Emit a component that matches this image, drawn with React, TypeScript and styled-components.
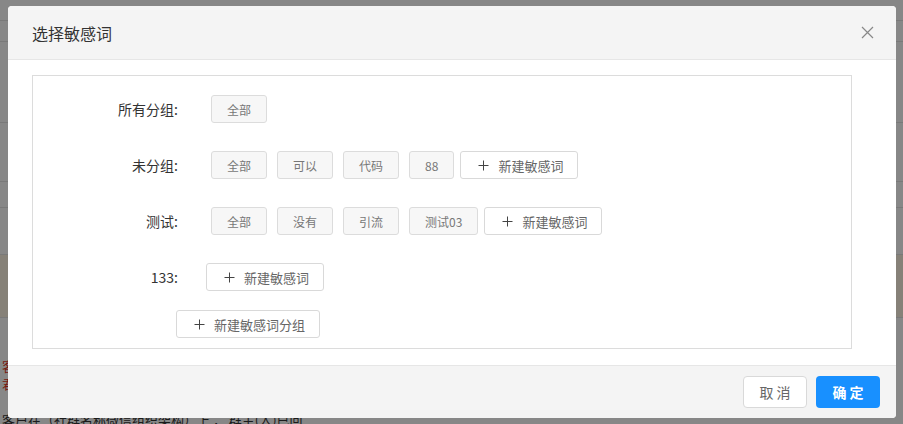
import React from 'react'
import styled, { createGlobalStyle } from 'styled-components'

const GlobalStyle = createGlobalStyle`
  html, body {
    margin: 0;
    padding: 0;
    width: 903px;
    height: 424px;
    overflow: hidden;
    font-family: "Noto Sans CJK SC", "Noto Sans", "Liberation Sans", sans-serif;
  }
`

const groups = [
  { name: '未分组', words: ['全部', '可以', '代码', '88'] },
  { name: '测试', words: ['全部', '没有', '引流', '测试03'] },
  { name: '133', words: [] as string[] },
]

const PlusIcon = () => (
  <svg width="11" height="11" viewBox="0 0 11 11">
    <path d="M5.5 0.5v10M0.5 5.5h10" stroke="#444" strokeWidth="1" fill="none" />
  </svg>
)

const App = () => {
  return (
    <>
      <GlobalStyle />
      <Page>
        <BackRows>
          <BackRow $h={20} />
          <BackRow $h={20} />
          <BackRow $h={80} />
          <BackRow $h={58} />
          <BackRow $h={25} />
          <BackRow $h={46} />
          <BackRow $h={62} $tint />
          <BackText $red $top={38}>客户管理</BackText>
          <BackText $red $top={-2}>君君</BackText>
          <BackText $top={16}>客户在（社群名称微信组织架构）上 ， 群主(人)已回</BackText>
        </BackRows>
        <Overlay>
          <Modal>
            <Header>
              <Title>选择敏感词</Title>
              <Close aria-label="close">
                <svg width="13" height="13" viewBox="0 0 13 13">
                  <path d="M1 1l11 11M12 1L1 12" stroke="#888" strokeWidth="1.2" fill="none" />
                </svg>
              </Close>
            </Header>
            <Body>
              <Panel>
                <Row>
                  <Label>所有分组:</Label>
                  <Tag>全部</Tag>
                </Row>
                {groups.map((g) => (
                  <Row key={g.name}>
                    <Label>{g.name}:</Label>
                    {g.words.map((w) => (
                      <Tag key={w}>{w}</Tag>
                    ))}
                    <AddButton $shift={g.words.length === 0 ? -5 : -4}>
                      <PlusIcon />
                      新建敏感词
                    </AddButton>
                  </Row>
                ))}
                <GroupRow>
                  <AddButton>
                    <PlusIcon />
                    新建敏感词分组
                  </AddButton>
                </GroupRow>
              </Panel>
            </Body>
            <Footer>
              <CancelButton>取 消</CancelButton>
              <OkButton>确 定</OkButton>
            </Footer>
          </Modal>
        </Overlay>
      </Page>
    </>
  )
}

export default App

const Page = styled.div`
  position: relative;
  width: 903px;
  height: 424px;
  background: #fff;
  overflow: hidden;
`

const BackRows = styled.div`
  display: flex;
  flex-direction: column;
`

const BackRow = styled.div<{ $h: number; $tint?: boolean }>`
  height: ${({ $h }) => $h}px;
  border-bottom: 1px solid #e4e4e4;
  background: ${({ $tint }) => ($tint ? '#fdf3e3' : '#fff')};
`

const BackText = styled.div<{ $red?: boolean; $top: number }>`
  margin-top: ${({ $top }) => $top}px;
  padding-left: 2px;
  height: 20px;
  line-height: 20px;
  font-size: 13px;
  white-space: nowrap;
  color: ${({ $red }) => ($red ? '#e0341c' : '#333')};
`

const Overlay = styled.div`
  position: absolute;
  inset: 0;
  background: rgba(0, 0, 0, 0.47);
  padding: 6px 7px 0 8px;
`

const Modal = styled.div`
  width: 888px;
  height: 412px;
  background: #fff;
  border-radius: 4px;
  overflow: hidden;
  display: flex;
  flex-direction: column;
`

const Header = styled.div`
  height: 54px;
  flex-shrink: 0;
  background: #f4f4f4;
  border-bottom: 1px solid #e6e6e6;
  display: flex;
  align-items: center;
  justify-content: space-between;
  padding: 0 22px 0 24px;
  box-sizing: border-box;
`

const Title = styled.div`
  font-size: 16px;
  color: #333;
`

const Close = styled.div`
  width: 13px;
  height: 13px;
  display: flex;
`

const Body = styled.div`
  flex: 1;
  padding: 15px 44px 16px 24px;
`

const Panel = styled.div`
  border: 1px solid #dcdcdc;
  padding: 19px 0 10px;
  display: flex;
  flex-direction: column;
  gap: 28px;
`

const Row = styled.div`
  display: flex;
  align-items: center;
  gap: 10px;
  height: 28px;
`

const GroupRow = styled.div`
  display: flex;
  padding-left: 143px;
  margin-top: -9px;
`

const Label = styled.div`
  width: 145px;
  margin-right: 23px;
  text-align: right;
  font-size: 14px;
  color: #333;
`

const Tag = styled.div`
  height: 28px;
  box-sizing: border-box;
  padding: 0 15px;
  border: 1px solid #dcdcdc;
  border-radius: 3px;
  background: #f7f7f7;
  display: flex;
  align-items: center;
  justify-content: center;
  font-size: 12px;
  color: #777;
`

const AddButton = styled.div<{ $shift?: number }>`
  height: 28px;
  box-sizing: border-box;
  padding: 0 14px 0 17px;
  border: 1px solid #d9d9d9;
  border-radius: 3px;
  background: #fff;
  display: flex;
  align-items: center;
  gap: 9px;
  font-size: 13px;
  color: #666;
  margin-left: ${({ $shift }) => $shift ?? 0}px;
`

const Footer = styled.div`
  height: 53px;
  flex-shrink: 0;
  background: #f4f4f4;
  border-top: 1px solid #e6e6e6;
  display: flex;
  align-items: center;
  justify-content: flex-end;
  gap: 9px;
  padding: 0 16px;
  box-sizing: border-box;
`

const BaseButton = styled.div`
  width: 64px;
  height: 32px;
  box-sizing: border-box;
  border-radius: 4px;
  display: flex;
  align-items: center;
  justify-content: center;
  font-size: 14px;
`

const CancelButton = styled(BaseButton)`
  background: #fff;
  border: 1px solid #d9d9d9;
  color: #666;
`

const OkButton = styled(BaseButton)`
  background: #1890ff;
  color: #fff;
  font-weight: 600;
`
